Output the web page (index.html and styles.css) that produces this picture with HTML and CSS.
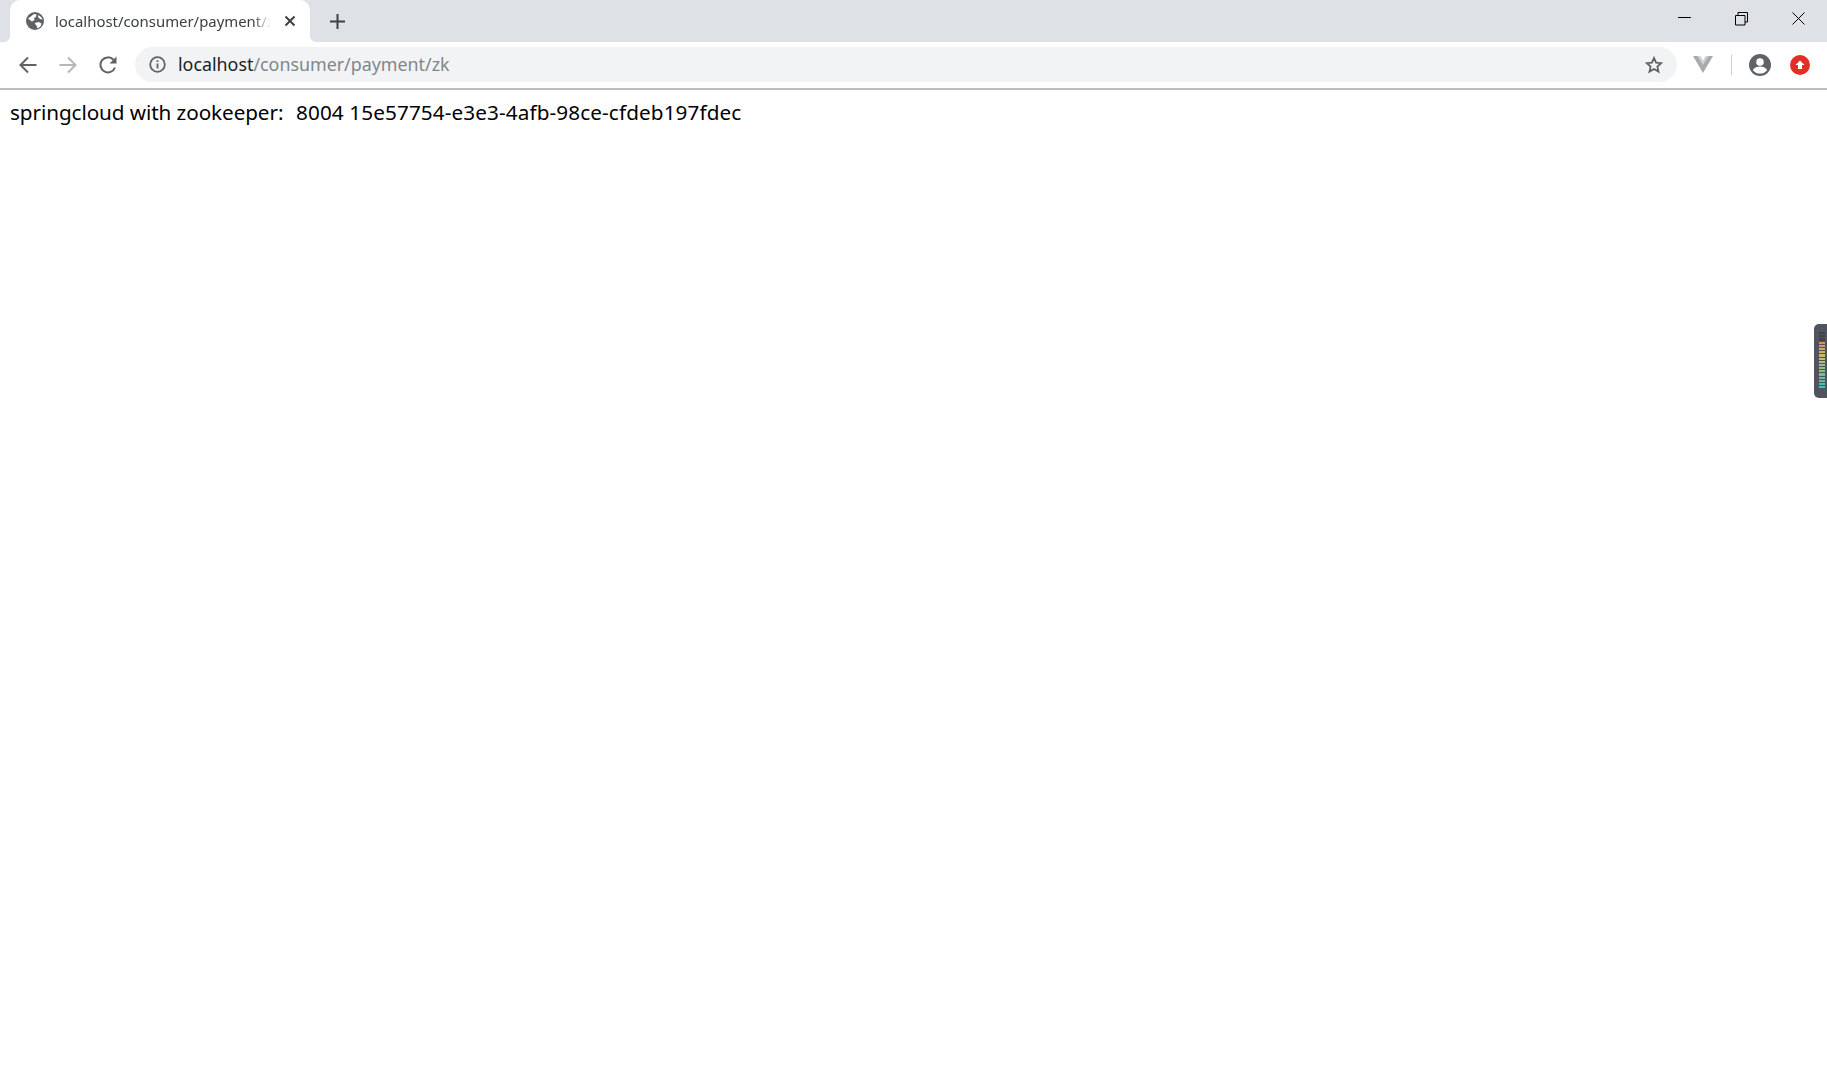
FILE: index.html
```html
<!DOCTYPE html>
<html lang="en">
<head>
  <title>localhost/consumer/payment/zk</title>
  <meta charset="utf-8">
  <link rel="stylesheet" href="styles.css">
</head>
<body>
  <header class="browser">
    <div class="tabstrip">
      <div class="tab">
        <svg class="tab-favicon" viewBox="0 0 18 18" aria-hidden="true">
          <circle cx="9" cy="9" r="9" fill="#5f6368"/>
          <path d="M2 6.500 5.500 4 8 2l2.500.5L10 5 8 6 8.500 8 6 9.500 4.500 8.500zM9 11l3.500-1 3 1.500-1 3-3 2-1-3-1.500-1.500zM12.500 3l3 2.500 1 2-2.500-.5-2-2z" fill="#fff"/>
        </svg>
        <span class="tab-title">localhost/consumer/payment/zk</span>
        <svg class="tab-close" viewBox="0 0 12 12" aria-hidden="true">
          <path d="M1.500 1.500 10.500 10.500M10.500 1.500 1.500 10.500"/>
        </svg>
      </div>
      <svg class="tab-new" viewBox="0 0 15 15" aria-hidden="true">
        <path d="M7.500 0v15M0 7.500h15"/>
      </svg>
      <div class="window-controls">
        <svg class="window-btn" viewBox="0 0 14 14" aria-hidden="true"><path d="M0 5.500h13"/></svg>
        <svg class="window-btn" viewBox="0 0 14 14" aria-hidden="true"><path d="M.5 3.500h9.500v9.500H.5zM3 3.500V.5h9.500v9.500h-2.500"/></svg>
        <svg class="window-btn" viewBox="0 0 14 14" aria-hidden="true"><path d="M.5.5l12 12M12.500.5l-12 12"/></svg>
      </div>
    </div>
    <div class="toolbar">
      <svg class="nav-icon" viewBox="0 0 18 18" aria-hidden="true"><path d="M17.500 9H1.500M9 1.500 1.500 9 9 16.500"/></svg>
      <svg class="nav-icon nav-disabled" viewBox="0 0 18 18" aria-hidden="true"><path d="M.5 9h16M9 1.500 16.500 9 9 16.500"/></svg>
      <svg class="nav-icon" viewBox="0 0 18 18" aria-hidden="true"><path d="M16 11.500A7.500 7.500 0 1 1 14.500 3.800"/><path class="nav-solid" d="M17.500 .5v7h-7z"/></svg>
      <div class="omnibox">
        <svg class="omni-info" viewBox="0 0 17 17" aria-hidden="true">
          <circle cx="8.500" cy="8.500" r="7.300"/>
          <path d="M8.500 7.500v5M8.500 4.300v1.800"/>
        </svg>
        <span class="omni-url"><span class="omni-host">localhost</span>/consumer/payment/zk</span>
        <svg class="omni-star" viewBox="0 0 18 18" aria-hidden="true">
          <path d="M9 2l2.100 4.700 5.100.5-3.800 3.400 1.100 5L9 13l-4.500 2.600 1.100-5L1.800 7.200l5.100-.5z"/>
        </svg>
      </div>
      <svg class="ext-vue" viewBox="0 0 20 17" aria-hidden="true">
        <path d="M0 0h6.500L10 6 13.500 0H20L10 17z" fill="#a8abad"/>
        <path d="M4.500 0H7.500L10 4.500 12.500 0h3L10 9z" fill="#d0d2d3"/>
      </svg>
      <span class="toolbar-sep"></span>
      <svg class="ext-avatar" viewBox="0 0 22 22" aria-hidden="true">
        <circle cx="11" cy="11" r="11" fill="#5f6368"/>
        <circle cx="11" cy="8" r="3.800" fill="#fff"/>
        <path d="M3.800 16c1.500-2.500 4.500-3.500 7.200-3.500s5.700 1 7.200 3.500a9 9 0 0 1-14.400 0z" fill="#fff"/>
      </svg>
      <svg class="ext-upload" viewBox="0 0 20 20" aria-hidden="true">
        <circle cx="10" cy="10" r="10" fill="#e02f27"/>
        <path d="M10 5.500 14.500 10h-2.500v4h-4v-4H5.500z" fill="#fff"/>
      </svg>
    </div>
  </header>

  <main class="page">springcloud with zookeeper:&nbsp; <span class="page-value">8004 15e57754-e3e3-4afb-98ce-cfdeb197fdec</span></main>

  <div class="meter-tab">
    <div class="meter-bars">
      <i style="background:#3f444b"></i><i style="background:#3f444b"></i><i style="background:#3f444b"></i>
      <i style="background:#d98f5e"></i><i style="background:#d69c5e"></i><i style="background:#d2a75f"></i><i style="background:#cdb162"></i>
      <i style="background:#c8b966"></i><i style="background:#bfbe6b"></i><i style="background:#b1c070"></i><i style="background:#a2c275"></i>
      <i style="background:#90c37a"></i><i style="background:#7ec383"></i><i style="background:#6ec38e"></i><i style="background:#60c29b"></i>
      <i style="background:#55c1a6"></i><i style="background:#4ec0af"></i><i style="background:#4abfb5"></i>
    </div>
  </div>
</body>
</html>
```

FILE: styles.css
```css
* {
  box-sizing: border-box;
}

html, body {
  height: 100%;
}

body {
  margin: 0;
  background-color: #FFFFFF;
  color: #000000;
  font-family: "Noto Sans", sans-serif;
  overflow: hidden;
}

.tabstrip {
  display: flex;
  align-items: center;
  height: 42px;
  padding-left: 10px;
  background-color: #DEE1E6;
}

.tab {
  position: relative;
  display: flex;
  align-items: center;
  align-self: stretch;
  width: 300px;
  padding: 0 14px 0 16px;
  background-color: #FFFFFF;
  border-radius: 10px 10px 0 0;
  font-size: 14.900px;
  color: #3c4043;
}

.tab::before, .tab::after {
  content: "";
  position: absolute;
  bottom: 0;
  width: 7px;
  height: 7px;
}

.tab::before {
  left: -7px;
  background: radial-gradient(circle at 0 0, transparent 7px, #FFFFFF 7.500px);
}

.tab::after {
  right: -7px;
  background: radial-gradient(circle at 100% 0, transparent 7px, #FFFFFF 7.500px);
}

.tab-favicon {
  flex: none;
  width: 18px;
  height: 18px;
  margin-right: 11px;
}

.tab-title {
  flex: 1;
  min-width: 0;
  overflow: hidden;
  white-space: nowrap;
  -webkit-mask-image: linear-gradient(to right, #000 90%, transparent 98%);
  mask-image: linear-gradient(to right, #000 90%, transparent 98%);
}

.tab-close {
  flex: none;
  width: 12px;
  height: 12px;
  margin-left: 9px;
  fill: none;
  stroke: #3c4043;
  stroke-width: 2;
}

.tab-new {
  flex: none;
  width: 15px;
  height: 15px;
  margin-left: 20px;
  fill: none;
  stroke: #3c4043;
  stroke-width: 2;
}

.window-controls {
  display: flex;
  gap: 43px;
  margin-left: auto;
  padding-right: 21px;
  align-self: flex-start;
  padding-top: 12px;
}

.window-btn {
  width: 14px;
  height: 14px;
  fill: none;
  stroke: #000000;
  stroke-width: 1;
}

.toolbar {
  display: flex;
  align-items: center;
  height: 48px;
  padding: 0 17px 1px 19px;
  background-color: #FFFFFF;
  border-bottom: 2px solid #BDBEC0;
}

.nav-icon {
  flex: none;
  width: 18px;
  height: 18px;
  margin-right: 22px;
  fill: none;
  stroke: #5f6368;
  stroke-width: 2;
}

.nav-disabled {
  stroke: #b5b8bb;
}

.nav-solid {
  fill: #5f6368;
  stroke: none;
}

.omnibox {
  display: flex;
  align-items: center;
  flex: 1;
  height: 35px;
  margin-left: -4px;
  padding: 0 14px;
  background-color: #F1F3F4;
  border-radius: 18px;
}

.omni-info {
  flex: none;
  width: 17px;
  height: 17px;
  margin-right: 12px;
  fill: none;
  stroke: #5f6368;
  stroke-width: 1.800;
}

.omni-url {
  flex: 1;
  padding-bottom: 2px;
  font-size: 17.850px;
  color: #80868b;
  white-space: nowrap;
}

.omni-host {
  color: #202124;
}

.omni-star {
  flex: none;
  width: 18px;
  height: 18px;
  fill: none;
  stroke: #5f6368;
  stroke-width: 1.800;
}

.ext-vue {
  flex: none;
  width: 20px;
  height: 17px;
  margin-left: 16px;
}

.toolbar-sep {
  flex: none;
  width: 1px;
  height: 20px;
  margin-left: 18px;
  background-color: #CCCDCF;
}

.ext-avatar {
  flex: none;
  width: 22px;
  height: 22px;
  margin-left: 17px;
}

.ext-upload {
  flex: none;
  width: 20px;
  height: 20px;
  margin-left: 19px;
}

.page {
  padding: 8px 10px;
  font-size: 20.700px;
  line-height: 29px;
  letter-spacing: -0.080px;
  white-space: nowrap;
}

.page-value {
  margin-left: 2px;
  letter-spacing: 0.120px;
}

.meter-tab {
  position: absolute;
  top: 324px;
  right: 0;
  width: 13px;
  height: 74px;
  padding: 8px 0 0 5px;
  background-color: #50545f;
  border-radius: 5px 0 0 5px;
}

.meter-bars {
  display: flex;
  flex-direction: column;
  gap: 1px;
  width: 6px;
}

.meter-bars i {
  display: block;
  height: 2.200px;
}
```
